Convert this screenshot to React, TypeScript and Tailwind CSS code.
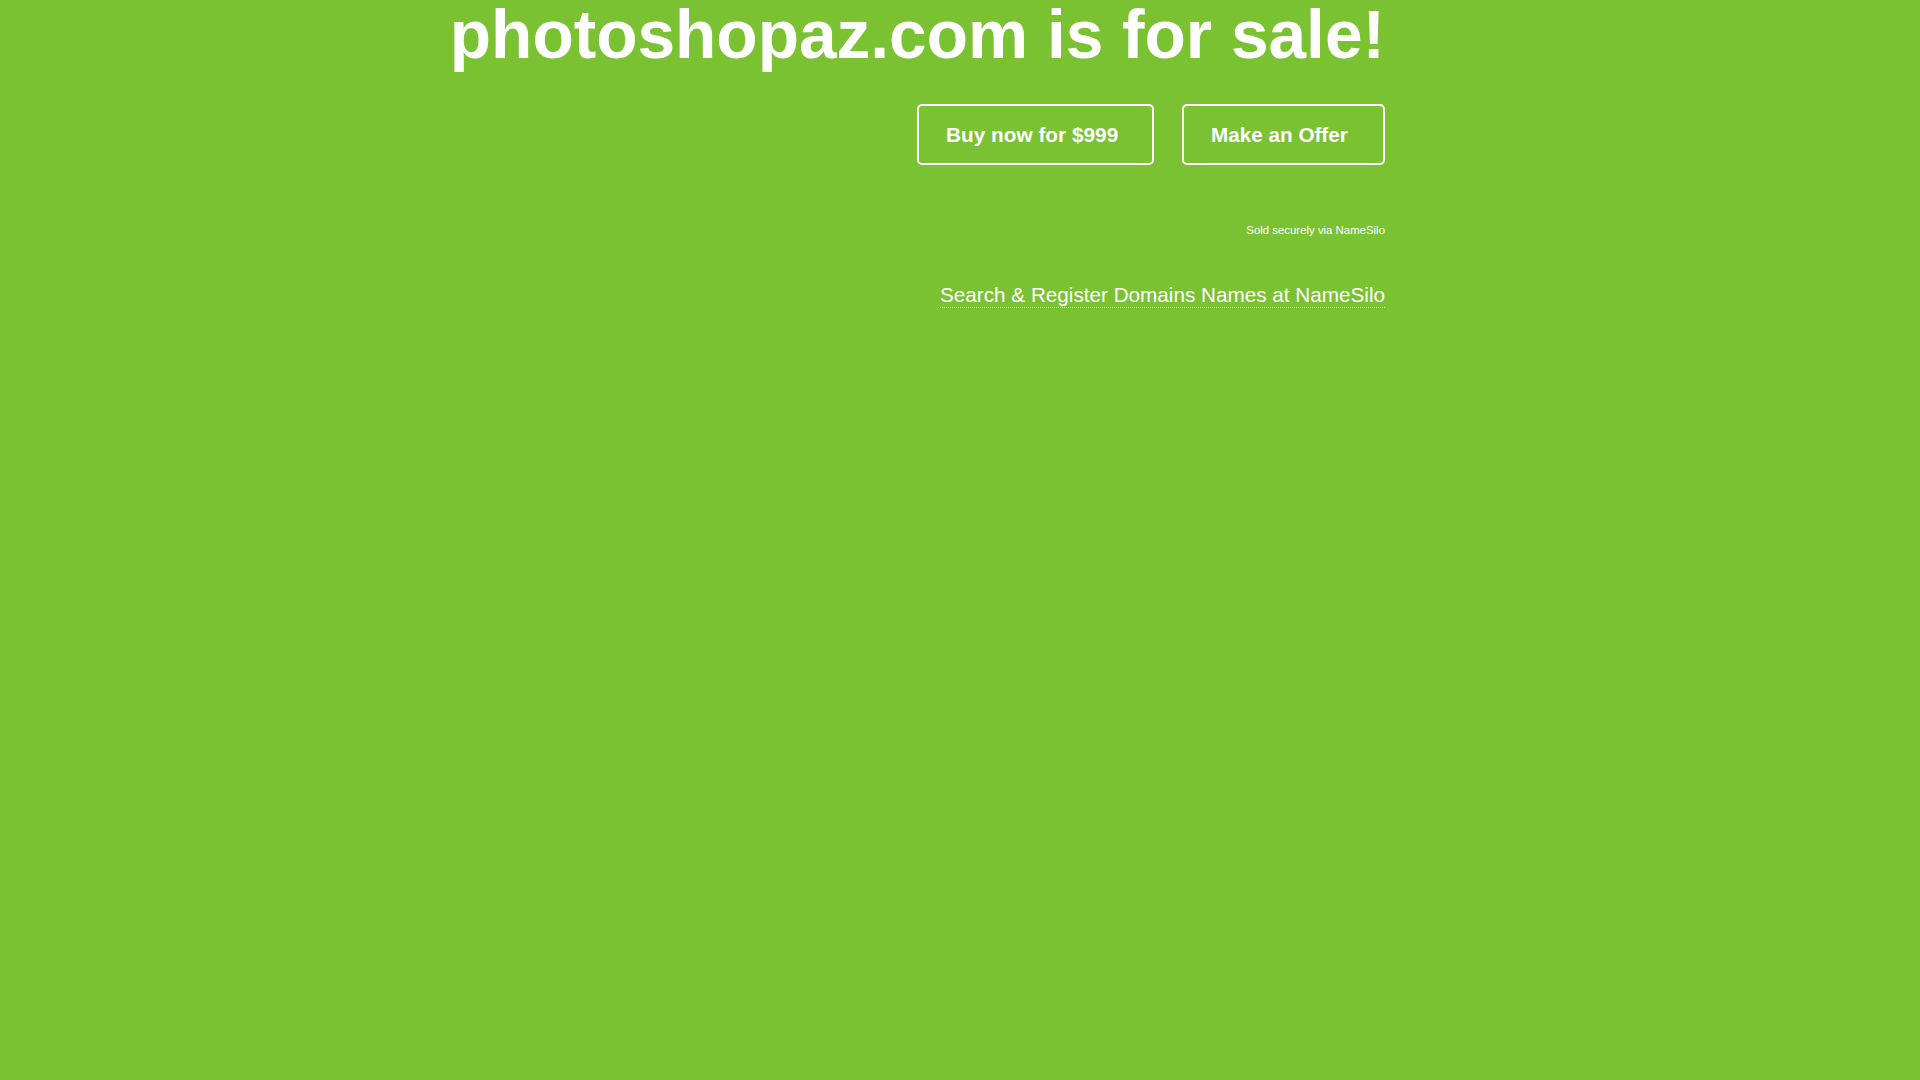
export default function App() {
  return (
    <div className="min-h-screen w-full bg-[#7ac232] text-white font-['Liberation_Sans',Arial,sans-serif]">
      <div className="mx-auto flex w-[850px] flex-col items-end">
        <h1 className="mt-[0.5px] flex w-full justify-end whitespace-nowrap text-[67.6px] font-bold leading-[67px]">
          photoshopaz.com is for sale!
        </h1>
        <div className="mt-[36px] flex gap-[28px]">
          <a
            href="#"
            className="flex h-[61px] w-[237px] items-center rounded-[5px] border-2 border-white pl-[27px] pt-[2px] text-[20.8px] font-bold"
          >
            Buy now for $999
          </a>
          <a
            href="#"
            className="flex h-[61px] w-[203px] items-center rounded-[5px] border-2 border-white pl-[27px] pt-[2px] text-[20.7px] font-bold"
          >
            Make an Offer
          </a>
        </div>
        <p className="mt-[60px] text-[11.4px] leading-none">Sold securely via NameSilo</p>
        <a
          href="#"
          className="mt-[47px] inline-block border-b border-dotted border-white/70 text-[20.7px] leading-[24px]"
        >
          Search &amp; Register Domains Names at NameSilo
        </a>
      </div>
    </div>
  );
}
